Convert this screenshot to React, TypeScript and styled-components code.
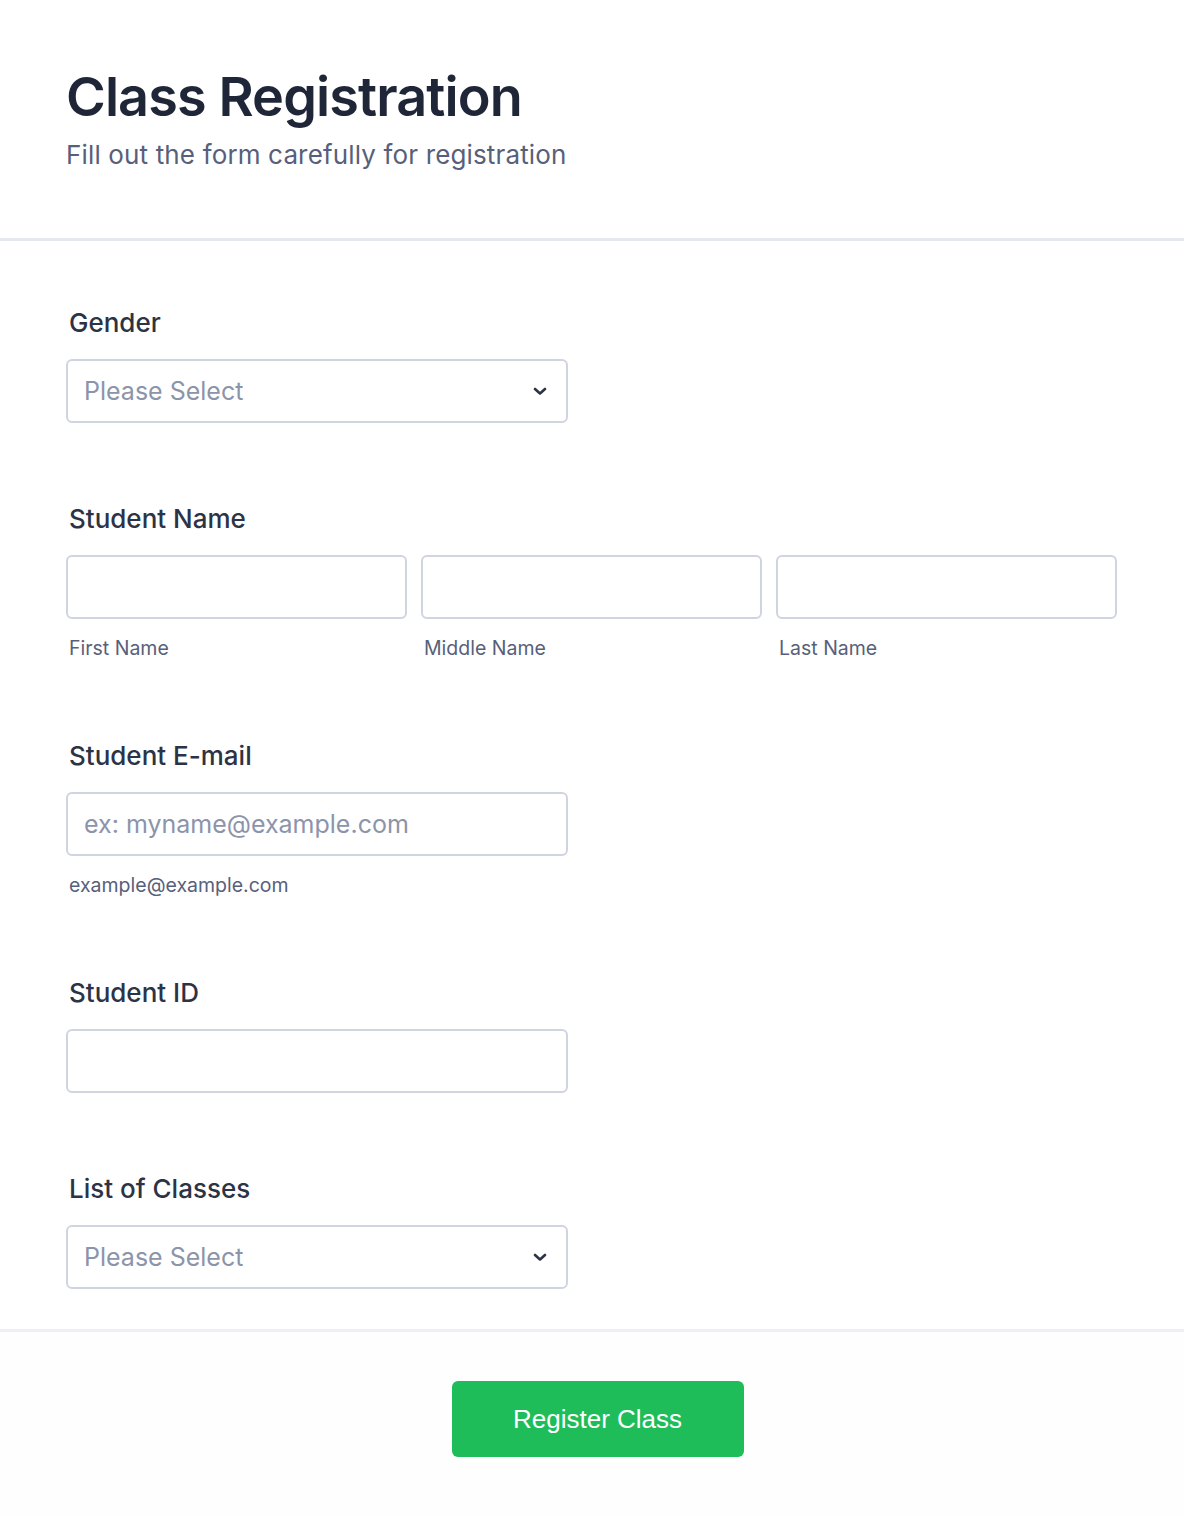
import React from 'react';
import styled, { createGlobalStyle } from 'styled-components';

const GlobalStyle = createGlobalStyle`
  html, body {
    margin: 0;
    padding: 0;
    background: #ffffff;
  }
  body {
    font-family: Inter, 'Noto Sans', 'Liberation Sans', sans-serif;
    color: #2c3345;
    -webkit-font-smoothing: antialiased;
  }
  * {
    box-sizing: border-box;
  }
`;

const Page = styled.div`
  width: 1184px;
  min-height: 1516px;
  display: flex;
  flex-direction: column;
  background: #ffffff;
`;

const Header = styled.header`
  padding: 65px 66px 67px;
  border-bottom: 3px solid #e6e8ef;
`;

const Title = styled.h1`
  margin: 0;
  font-size: 54px;
  line-height: 64px;
  font-weight: 600;
  letter-spacing: -0.9px;
  color: #1f2637;
`;

const Subtitle = styled.p`
  margin: 10px 0 0;
  font-size: 26px;
  line-height: 32px;
  letter-spacing: 0.15px;
  color: #57607a;
`;

const Body = styled.main`
  padding: 62px 66px 40px;
  display: flex;
  flex-direction: column;
  gap: 76px;
`;

const Field = styled.section`
  display: flex;
  flex-direction: column;
`;

const Label = styled.label`
  font-size: 26px;
  line-height: 32px;
  font-weight: 500;
  color: #2c3345;
  padding: 4px 0 0 3px;
  margin-bottom: 20px;
`;

const Control = styled.div<{ $wide?: boolean }>`
  width: ${({ $wide }) => ($wide ? '341px' : '502px')};
  height: 64px;
  border: 2px solid #cfd4e0;
  border-radius: 6px;
  background: #ffffff;
  display: flex;
  align-items: center;
  padding: 0 18px 0 16px;
`;

const Placeholder = styled.span`
  font-size: 25px;
  color: #8c94aa;
  flex: 1;
`;

const Chevron = styled.svg`
  width: 16px;
  height: 16px;
`;

const NameRow = styled.div`
  display: grid;
  grid-template-columns: repeat(3, 341px);
  gap: 14px;
`;

const NamePart = styled.div`
  display: flex;
  flex-direction: column;
`;

const Hint = styled.span`
  font-size: 19.5px;
  line-height: 24px;
  color: #57607a;
  padding-left: 3px;
  margin-top: 17px;
`;

const Footer = styled.footer`
  flex: 1;
  border-top: 3px solid #edeff6;
  background: #fefefe;
  display: flex;
  justify-content: center;
  padding: 49px 0 0 11px;
`;

const SubmitButton = styled.button`
  width: 292px;
  height: 76px;
  border: none;
  border-radius: 6px;
  background: #1ebd5a;
  color: #ffffff;
  font-family: 'Liberation Sans', Arial, sans-serif;
  font-size: 26px;
  cursor: pointer;
`;

const ChevronIcon = () => (
  <Chevron viewBox="0 0 16 16" fill="none">
    <path d="M3 6l5 4.5L13 6" stroke="#2c3345" strokeWidth="2.6" strokeLinecap="round" strokeLinejoin="round" />
  </Chevron>
);

const SelectBox = ({ text }: { text: string }) => (
  <Control>
    <Placeholder>{text}</Placeholder>
    <ChevronIcon />
  </Control>
);

export default function App() {
  return (
    <>
      <GlobalStyle />
      <Page>
        <Header>
          <Title>Class Registration</Title>
          <Subtitle>Fill out the form carefully for registration</Subtitle>
        </Header>
        <Body>
          <Field>
            <Label>Gender</Label>
            <SelectBox text="Please Select" />
          </Field>

          <Field>
            <Label>Student Name</Label>
            <NameRow>
              {['First Name', 'Middle Name', 'Last Name'].map((name) => (
                <NamePart key={name}>
                  <Control $wide />
                  <Hint>{name}</Hint>
                </NamePart>
              ))}
            </NameRow>
          </Field>

          <Field>
            <Label>Student E-mail</Label>
            <Control>
              <Placeholder>ex: myname@example.com</Placeholder>
            </Control>
            <Hint>example@example.com</Hint>
          </Field>

          <Field>
            <Label>Student ID</Label>
            <Control />
          </Field>

          <Field>
            <Label>List of Classes</Label>
            <SelectBox text="Please Select" />
          </Field>
        </Body>
        <Footer>
          <SubmitButton>Register Class</SubmitButton>
        </Footer>
      </Page>
    </>
  );
}
